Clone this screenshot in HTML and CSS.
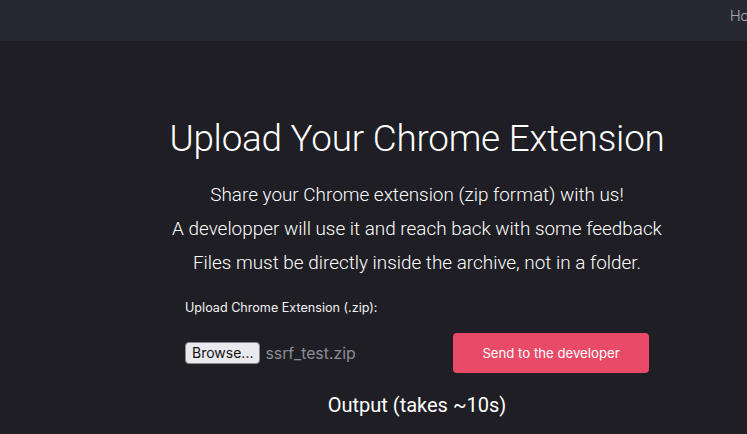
FILE: index.html
```html
<!DOCTYPE html>
<html>
<head>
<meta charset="utf-8">
<link rel="stylesheet" href="styles.css">
</head>
<body>
<header class="topbar">
  <nav class="nav"><a class="nav-link" href="#">Home</a></nav>
</header>
<main class="content">
  <h1 class="title">Upload Your Chrome Extension</h1>
  <p class="lead">Share your Chrome extension (zip format) with us!</p>
  <p class="lead">A developper will use it and reach back with some feedback</p>
  <p class="lead">Files must be directly inside the archive, not in a folder.</p>
  <form class="upload">
    <label class="upload-label">Upload Chrome Extension (.zip):</label>
    <div class="upload-row">
      <div class="file">
        <span class="browse">Browse...</span>
        <span class="filename">ssrf_test.zip</span>
      </div>
      <button type="button" class="send">Send to the developer</button>
    </div>
  </form>
  <h2 class="output">Output (takes ~10s)</h2>
</main>
</body>
</html>
```

FILE: styles.css
```css
html, body {
  margin: 0;
  padding: 0;
  background: #1e1e24;
  overflow: hidden;
  height: 434px;
}
body {
  font-family: Roboto, "Liberation Sans", sans-serif;
  color: #ffffff;
}
.topbar {
  height: 42px;
  background: #282831;
  border-bottom: 1px solid #1a1a20;
  box-sizing: border-box;
  display: flex;
  justify-content: flex-end;
  align-items: flex-start;
  overflow: hidden;
  white-space: nowrap;
}
.nav {
  margin-right: -23px;
  padding-top: 6px;
}
.nav-link {
  color: #b9b9c2;
  font-size: 15px;
  font-weight: 300;
  text-decoration: none;
}
.content {
  width: 500px;
  margin-left: 167px;
  text-align: center;
  padding-top: 76px;
}
.title {
  margin: 0;
  font-size: 36.8px;
  font-weight: 300;
  line-height: 42px;
  letter-spacing: -0.2px;
}
.lead {
  margin: 0;
  font-size: 18.9px;
  font-weight: 300;
  line-height: 34px;
}
.lead:first-of-type {
  margin-top: 18px;
}
.upload {
  text-align: left;
  margin-top: 20px;
  padding-left: 18px;
}
.upload-label {
  display: block;
  font-family: Inter, "Noto Sans", sans-serif;
  font-size: 12.6px;
  font-weight: 400;
  color: #f2f2f2;
}
.upload-row {
  display: flex;
  align-items: center;
  margin-top: 18px;
}
.file {
  display: flex;
  align-items: center;
  width: 268px;
  font-family: Inter, "Noto Sans", sans-serif;
}
.browse {
  background: #e9e9ee;
  color: #111;
  border: 1px solid #8a8a90;
  border-radius: 4px;
  font-size: 14px;
  padding: 2px 6px 2px 6px;
  line-height: 16px;
}
.filename {
  margin-left: 5px;
  color: #8d8d93;
  font-size: 15.8px;
}
.send {
  width: 196px;
  height: 40px;
  background: #e84a67;
  color: #fff;
  border: none;
  border-radius: 4px;
  font-family: Inter, "Noto Sans", sans-serif;
  font-size: 13.2px;
}
.output {
  margin: 18px 0 0;
  font-size: 20px;
  font-weight: 400;
  line-height: 28px;
}
```
